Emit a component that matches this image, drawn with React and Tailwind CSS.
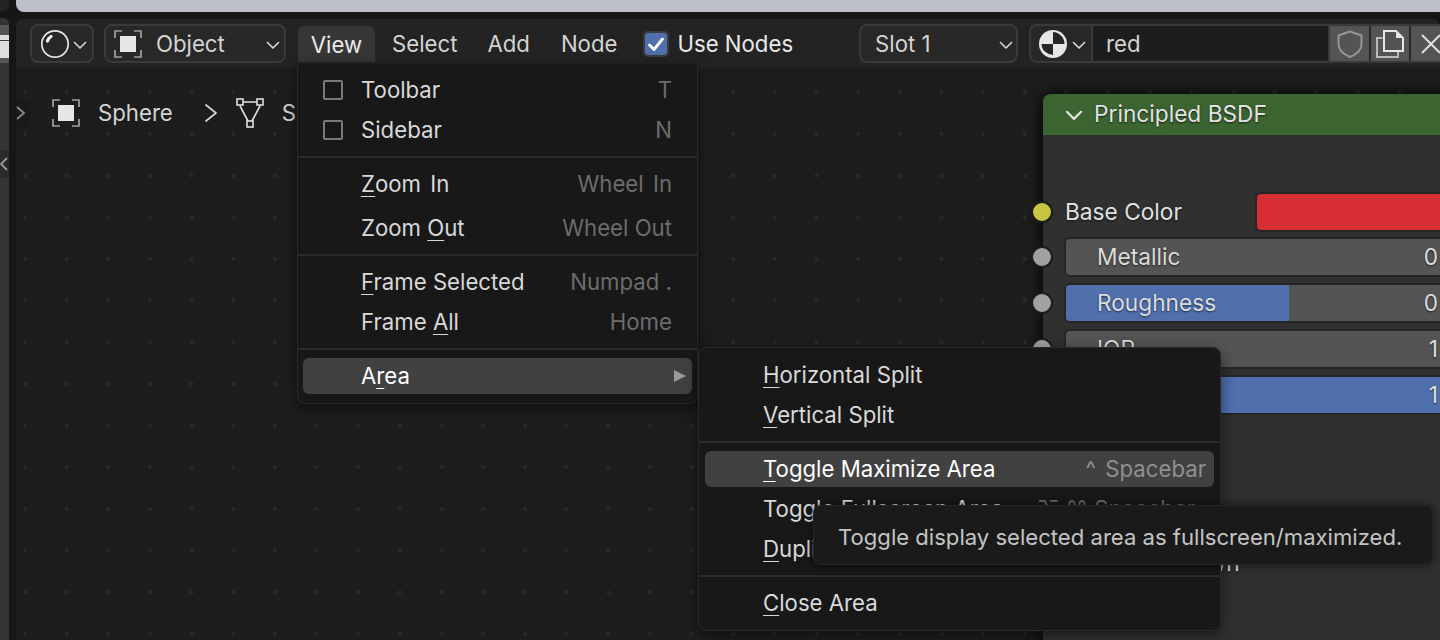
const ITEM_TEXT = 'text-[#d9d9d9]'
const HINT_TEXT = 'text-[#6c6c6c]'

const Chevron = ({ className = '' }) => (
  <svg viewBox="0 0 14 14" className={`h-[14px] w-[14px] ${className}`} fill="none" stroke="currentColor" strokeWidth="1.7" strokeLinecap="round" strokeLinejoin="round">
    <path d="M1.5 4.5 7 10 12.5 4.5" />
  </svg>
)

const ObjectIcon = ({ className = '' }) => (
  <svg viewBox="0 0 28 28" className={`h-[28px] w-[28px] ${className}`} fill="none">
    <rect x="6" y="6" width="16" height="16" fill="#e6e6e6" />
    <path d="M1 8V1H8M20 1H27V8M27 20V27H20M8 27H1V20" stroke="#a0a0a0" strokeWidth="1.7" />
  </svg>
)

const SphereIcon = () => (
  <svg viewBox="0 0 30 30" className="h-[30px] w-[30px]" fill="none">
    <circle cx="15" cy="15" r="13.2" stroke="#e6e6e6" strokeWidth="1.7" />
    <path d="M7.5 12C8.2 10 9.5 8.5 11 7.5" stroke="#f0f0f0" strokeWidth="3.2" strokeLinecap="round" />
  </svg>
)

const MeshIcon = () => (
  <svg viewBox="0 0 30 30" className="h-[30px] w-[30px]" fill="none" stroke="#e0e0e0" strokeWidth="1.6">
    <path d="M8 4H22M5 8 13 23M25 8 17 23" />
    <rect x="2" y="1" width="6" height="6" />
    <rect x="22" y="1" width="6" height="6" />
    <rect x="12" y="23" width="6" height="6" />
  </svg>
)

const MaterialIcon = () => (
  <svg viewBox="0 0 28 28" className="h-[28px] w-[28px]">
    <circle cx="14" cy="14" r="14" fill="#e6e6e6" />
    <path d="M14 14H2.5A12 11 0 0 0 14 25ZM14 14V2A12 12 0 0 1 25.5 14Z" fill="#262626" />
  </svg>
)

const Underlined = ({ text, at }) => {
  if (at === undefined) return text
  return (
    <>
      {text.slice(0, at)}
      <span className="underline decoration-1 underline-offset-[4px]">{text[at]}</span>
      {text.slice(at + 1)}
    </>
  )
}

const CheckBox = () => <span className="mr-[18px] h-[20px] w-[20px] rounded-[2px] border-2 border-[#7a7a7a]" />

const Row = ({ label, at, hint, check, spaced, height = 'h-[40px]', pad = 'pl-[63px]' }) => (
  <div className={`flex items-center justify-between pr-[25px] ${height} ${check ? 'pl-[25px]' : pad} ${spaced ? '[word-spacing:3px]' : ''}`}>
    <span className={`flex items-center ${ITEM_TEXT}`}>
      {check && <CheckBox />}
      <span><Underlined text={label} at={at} /></span>
    </span>
    {hint && <span className={HINT_TEXT}>{hint}</span>}
  </div>
)

const ActiveRow = ({ label, at, hint, arrow, margin }) => (
  <div className={`mt-[2px] flex h-[36px] items-center justify-between rounded-[6px] bg-[#414141] pl-[58px] ${margin}`}>
    <span className="text-white"><Underlined text={label} at={at} /></span>
    {hint && <span className="pr-[8px] text-[#8f8f8f] [word-spacing:3px]">{hint}</span>}
    {arrow && (
      <svg viewBox="0 0 12 12" className="mr-[6px] h-[12px] w-[12px]">
        <path d="M0 0 12 6 0 12Z" fill="#9a9a9a" />
      </svg>
    )}
  </div>
)

const Separator = () => (
  <div className="flex h-[14px] items-center">
    <div className="h-[2px] w-full bg-[#2b2b2b]" />
  </div>
)

const ViewMenu = () => (
  <div className="absolute left-[297px] top-[64px] z-30 flex w-[401px] flex-col rounded-b-[8px] border-x border-b border-[#2a2a2a] bg-[#181818] pt-[6px] pb-[9px] shadow-[0_4px_14px_rgba(0,0,0,0.5)]">
    <Row label="Toolbar" hint="T" check />
    <Row label="Sidebar" hint="N" check />
    <Separator />
    <Row label="Zoom In" at={0} hint="Wheel In" spaced />
    <div className="mt-[4px]"><Row label="Zoom Out" at={5} hint="Wheel Out" /></div>
    <Separator />
    <Row label="Frame Selected" at={0} hint="Numpad ." />
    <Row label="Frame All" at={6} hint="Home" />
    <Separator />
    <ActiveRow label="Area" at={1} arrow margin="mx-[5px]" />
  </div>
)

const AreaMenu = () => (
  <div className="absolute left-[698px] top-[347px] z-30 flex w-[523px] flex-col rounded-[8px] border border-[#2a2a2a] bg-[#181818] pt-[7px] pb-[7px] shadow-[0_4px_14px_rgba(0,0,0,0.5)]">
    <Row label="Horizontal Split" at={0} pad="pl-[64px]" />
    <Row label="Vertical Split" at={0} pad="pl-[64px]" />
    <Separator />
    <ActiveRow label="Toggle Maximize Area" at={0} hint="^ Spacebar" margin="mx-[6px]" />
    <div className="mt-[2px]"><Row label="Toggle Fullscreen Area" hint="⌥ ⌘ Spacebar" pad="pl-[64px]" /></div>
    <Row label="Duplicate Area into New Window" at={0} pad="pl-[64px]" />
    <Separator />
    <Row label="Close Area" at={0} pad="pl-[64px]" />
  </div>
)

const Tooltip = () => (
  <div className="absolute left-[813px] top-[505px] z-40 flex h-[60px] w-[620px] items-center rounded-[8px] border border-[#262626] bg-[#1a1a1a] pl-[24px] pt-[4px] text-[22.1px] text-[#c4c4c4] shadow-[0_0_10px_rgba(0,0,0,0.6)]">
    Toggle display selected area as fullscreen/maximized.
  </div>
)

const Slider = ({ label, value, fill }) => (
  <div className="relative flex h-[40px] items-center rounded-l-[6px] border-2 border-r-0 border-[#262626] bg-[#545454] pl-[31px] pr-[2px] [text-shadow:0_1px_2px_rgba(0,0,0,0.6)]">
    {fill && <div className={`absolute inset-y-0 left-0 rounded-l-[4px] bg-[#4f6fad] ${fill}`} />}
    <span className="relative flex-1 text-[#dcdcdc]">{label}</span>
    <span className="relative text-[#dcdcdc]">{value}</span>
  </div>
)

const Socket = ({ color, top }) => (
  <span className={`absolute left-[-12px] h-[22px] w-[22px] rounded-full border-2 border-[#1c1c1c] ${color} ${top}`} />
)

const NodeCard = () => (
  <div className="absolute left-[1043px] top-[94px] z-10 h-[600px] w-[500px] rounded-t-[8px] bg-[#303030] text-[22.7px] shadow-[-2px_0_14px_rgba(0,0,0,0.85)]">
    <div className="flex h-[41px] items-center rounded-t-[8px] bg-[#3b6430] pl-[22px] text-[#e3e3e3] [text-shadow:0_1px_2px_rgba(0,0,0,0.7)]">
      <Chevron className="mr-[11px] h-[18px] w-[18px]" />
      Principled BSDF
    </div>
    <Socket color="bg-[#c7c641]" top="top-[107px]" />
    <Socket color="bg-[#a1a1a1]" top="top-[152px]" />
    <Socket color="bg-[#a1a1a1]" top="top-[198px]" />
    <Socket color="bg-[#a1a1a1]" top="top-[244px]" />
    <div className="flex flex-col pl-[21px] pr-[103px] pt-[56px]">
      <div className="flex h-[42px] items-center">
        <span className="ml-[1px] w-[190px] text-[#e0e0e0] [text-shadow:0_1px_2px_rgba(0,0,0,0.6)]">Base Color</span>
        <span className="h-[40px] flex-1 rounded-l-[6px] border-2 border-r-0 border-[#262626] bg-[#d62e32]" />
      </div>
      <div className="mt-[4px] flex flex-col gap-[6px]">
        <Slider label="Metallic" value="0" />
        <Slider label="Roughness" value="0" fill="w-[223px]" />
        <Slider label="IOR" value="1" />
        <Slider label="Alpha" value="1" fill="w-full" />
      </div>
      <span className="mt-[137px] pl-[114px] text-[#dcdcdc]">Down</span>
      <div className="mt-[63px] flex items-center text-[#dcdcdc]">
        <svg viewBox="0 0 12 16" className="ml-[5px] h-[16px] w-[12px]" fill="none" stroke="#c8c8c8" strokeWidth="1.7" strokeLinecap="round" strokeLinejoin="round">
          <path d="M2 2 10 8 2 14" />
        </svg>
        <span className="ml-[13px]">Sheen</span>
      </div>
    </div>
  </div>
)

const Pill = ({ children, className = '' }) => (
  <div className={`flex h-[39px] items-center rounded-[8px] border-2 border-[#3a3a3a] bg-[#282828] ${className}`}>{children}</div>
)

const HeaderBar = () => (
  <div className="flex h-[49px] shrink-0 items-center rounded-t-[8px] bg-[#232323] pl-[14px] text-[#d4d4d4]">
    <Pill className="w-[64px] pl-[8px]">
      <SphereIcon />
      <Chevron className="ml-[3px] mt-[2px] text-[#d4d4d4]" />
    </Pill>
    <Pill className="ml-[10px] w-[182px] pl-[8px]">
      <ObjectIcon />
      <span className="ml-[14px] mt-[2px] flex-1">Object</span>
      <Chevron className="mr-[4px] mt-[2px]" />
    </Pill>
    <div className="mb-[6px] ml-[12px] flex h-[36px] w-[77px] items-center justify-center self-end rounded-t-[6px] bg-[#363636] pt-[2px] text-[#eaeaea]">View</div>
    <span className="ml-[17px] mt-[2px]">Select</span>
    <span className="ml-[30px] mt-[2px]">Add</span>
    <span className="ml-[31px] mt-[2px]">Node</span>
    <span className="ml-[26px] flex h-[26px] w-[26px] items-center justify-center rounded-[5px] border-2 border-[#3c3c3c] bg-[#4f6fad]">
      <svg viewBox="0 0 20 20" className="h-[20px] w-[20px]" fill="none" stroke="#fff" strokeWidth="2.8" strokeLinecap="round" strokeLinejoin="round">
        <path d="M3.5 11 8 15.5 16.5 5" />
      </svg>
    </span>
    <span className="ml-[8px] mt-[2px] text-[#eaeaea]">Use Nodes</span>
    <Pill className="ml-[66px] w-[159px] pl-[14px]">
      <span className="mt-[2px] flex-1">Slot 1</span>
      <Chevron className="mr-[3px] mt-[2px]" />
    </Pill>
    <div className="ml-[11px] flex h-[39px] flex-1 items-center overflow-hidden rounded-l-[8px] border-2 border-r-0 border-[#3a3a3a] bg-[#282828]">
      <span className="ml-[8px]"><MaterialIcon /></span>
      <Chevron className="ml-[5px] mt-[2px] h-[13px] w-[13px]" />
      <span className="ml-[5px] flex h-full w-[239px] items-center border-x-2 border-[#3a3a3a] bg-[#1d1d1d] pl-[13px] pt-[2px] text-[#d4d4d4]">red</span>
      <span className="flex h-full w-[39px] items-center justify-center bg-[#545454]">
        <svg viewBox="0 0 26 28" className="h-[28px] w-[26px]" fill="none" stroke="#969696" strokeWidth="2" strokeLinejoin="round">
          <path d="M13 1.5 24.5 5.5V14C24.5 20 19 24.5 13 27 7 24.5 1.5 20 1.5 14V5.5Z" />
        </svg>
      </span>
      <span className="ml-[2px] flex h-full w-[38px] items-center justify-center bg-[#545454]">
        <svg viewBox="0 0 28 28" className="h-[28px] w-[28px]" fill="none">
          <path d="M6.5 8H1V27H22V22" stroke="#b8b8b8" strokeWidth="2" />
          <path d="M8 1H20L27 8V21H8Z" stroke="#e6e6e6" strokeWidth="2" />
          <path d="M20 1 27 8H20Z" fill="#e6e6e6" />
        </svg>
      </span>
      <span className="ml-[2px] flex h-full flex-1 items-center overflow-hidden bg-[#545454] pl-[9px]">
        <svg viewBox="0 0 22 22" className="h-[22px] w-[22px] shrink-0" fill="none" stroke="#e0e0e0" strokeWidth="2">
          <path d="M2 2 20 20M20 2 2 20" />
        </svg>
      </span>
    </div>
  </div>
)

const Breadcrumbs = () => (
  <div className="flex items-center pt-[30px] text-[#d4d4d4]">
    <span className="flex h-[28px] w-[14px] items-center rounded-r-[4px] bg-[#1a1a1a]">
      <svg viewBox="0 0 10 14" className="h-[14px] w-[10px]" fill="none" stroke="#8a8a8a" strokeWidth="1.8">
        <path d="M1 1 8 7 1 13" />
      </svg>
    </span>
    <ObjectIcon className="ml-[22px]" />
    <span className="ml-[18px]">Sphere</span>
    <svg viewBox="0 0 14 20" className="ml-[31px] h-[20px] w-[14px]" fill="none" stroke="#d4d4d4" strokeWidth="1.7" strokeLinecap="round" strokeLinejoin="round">
      <path d="M2 2 12 10 2 18" />
    </svg>
    <span className="ml-[17px]"><MeshIcon /></span>
    <span className="ml-[17px]">Sphere</span>
  </div>
)

const SideStrip = () => (
  <div className="flex w-[9px] shrink-0 flex-col">
    <div className="h-[11px] rounded-br-[6px] bg-[#232323]" />
    <div className="mt-[7px] flex flex-1 flex-col overflow-hidden rounded-tr-[6px] bg-[#333333]">
      <div className="mt-[7px] h-[10px] bg-[#555555]" />
      <div className="h-[5px] bg-[#dedede]" />
      <div className="h-[1px] bg-[#3a3a3a]" />
      <div className="h-[17px] bg-[#dedede]" />
      <div className="h-[5px] bg-[#555555]" />
      <div className="mt-[87px] flex h-[28px] items-center bg-[#2a2a2a]">
        <svg viewBox="0 0 8 14" className="h-[14px] w-[8px]" fill="none" stroke="#9a9a9a" strokeWidth="1.8">
          <path d="M7 1 1 7 7 13" />
        </svg>
      </div>
    </div>
  </div>
)

export default function App() {
  return (
    <div className="relative flex h-[640px] w-[1440px] overflow-hidden bg-[#161616] font-['Inter',sans-serif] text-[22.2px] leading-none">
      <SideStrip />
      <div className="ml-[7px] flex min-w-0 flex-1 flex-col">
        <div className="h-[12px] shrink-0 rounded-bl-[8px] bg-[#bcbfc6]" />
        <div className="mt-[7px] flex min-h-0 flex-1 flex-col">
          <HeaderBar />
          <div className="flex-1 bg-[#1d1d1d] bg-[radial-gradient(circle,#2a2a2a_1.6px,transparent_2.2px)] bg-[size:41.67px_41.67px] bg-[position:-11.8px_3.5px]">
            <Breadcrumbs />
          </div>
        </div>
      </div>
      <NodeCard />
      <ViewMenu />
      <AreaMenu />
      <Tooltip />
    </div>
  )
}
